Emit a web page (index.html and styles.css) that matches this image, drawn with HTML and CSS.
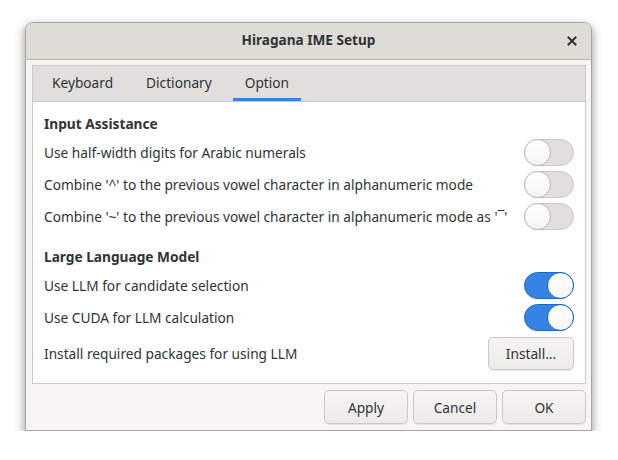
FILE: index.html
```html
<!DOCTYPE html>
<html>
<head>
<meta charset="utf-8">
<link rel="stylesheet" href="styles.css">
</head>
<body>
<div class="window">
  <div class="header">
    <div class="title">Hiragana IME Setup</div>
    <div class="close">
      <svg width="10" height="10" viewBox="0 0 10 10"><path d="M1.5 1.5 L8.5 8.5 M8.5 1.5 L1.5 8.5" stroke="#2e3436" stroke-width="2" stroke-linecap="square"/></svg>
    </div>
  </div>
  <div class="content">
    <div class="notebook">
      <div class="tabs">
        <div class="tab">Keyboard</div>
        <div class="tab">Dictionary</div>
        <div class="tab active">Option</div>
      </div>
      <div class="page">
        <div class="section-title">Input Assistance</div>
        <div class="row"><span>Use half-width digits for Arabic numerals</span><div class="switch"><div class="knob"></div></div></div>
        <div class="row"><span>Combine '^' to the previous vowel character in alphanumeric mode</span><div class="switch"><div class="knob"></div></div></div>
        <div class="row"><span>Combine '~' to the previous vowel character in alphanumeric mode as '¯'</span><div class="switch"><div class="knob"></div></div></div>
        <div class="section-title second">Large Language Model</div>
        <div class="row"><span>Use LLM for candidate selection</span><div class="switch on"><div class="knob"></div></div></div>
        <div class="row"><span>Use CUDA for LLM calculation</span><div class="switch on"><div class="knob"></div></div></div>
        <div class="row install-row"><span>Install required packages for using LLM</span><button class="btn install">Install...</button></div>
      </div>
    </div>
    <div class="actions">
      <button class="btn action">Apply</button>
      <button class="btn action">Cancel</button>
      <button class="btn action">OK</button>
    </div>
  </div>
</div>
</body>
</html>
```
FILE: styles.css
```css
html, body {
  margin: 0;
  padding: 0;
  background: #ffffff;
  font-family: "Noto Sans", "DejaVu Sans", sans-serif;
  font-size: 13.7px;
  color: #2e3436;
}
.window {
  margin: 22px 0 0 25px;
  width: 567px;
  height: 409px;
  box-sizing: border-box;
  border: 1px solid #a8a6a2;
  border-radius: 8px 8px 0 0;
  background: #f6f5f4;
  box-shadow: 0 4px 10px 1px rgba(0,0,0,0.38);
  display: flex;
  flex-direction: column;
}
.header {
  height: 37px;
  box-sizing: border-box;
  padding-bottom: 3px;
  flex: none;
  background: #dfdcd8;
  border-bottom: 1px solid #bfb8b1;
  border-radius: 7px 7px 0 0;
  display: flex;
  align-items: center;
  justify-content: center;
  position: relative;
}
.title {
  font-weight: bold;
  font-size: 13.6px;
}
.close {
  position: absolute;
  right: 14px;
  top: 13px;
  width: 10px;
  height: 10px;
  display: flex;
}
.content {
  flex: 1;
  padding: 5px 5px 0 6px;
  display: flex;
  flex-direction: column;
}
.notebook {
  border: 1px solid #cdc7c2;
  display: flex;
  flex-direction: column;
}
.tabs {
  height: 35px;
  background: #e1dedb;
  border-bottom: 1px solid #cdc7c2;
  display: flex;
  padding-left: 7px;
}
.tab {
  padding: 0 12px;
  margin-right: 9px;
  display: flex;
  align-items: center;
  box-sizing: border-box;
  height: 35px;
  padding-bottom: 2px;
  color: #2e3436;
}
.tab.active {
  border-bottom: 3px solid #3584e4;
  padding-bottom: 0;
}
.page {
  background: #ffffff;
  height: 281px;
  box-sizing: border-box;
  padding: 12px 11px 0 11px;
}
.section-title {
  font-weight: bold;
  height: 22px;
  line-height: 20px;
}
.section-title.second {
  margin-top: 15px;
  height: 22px;
}
.row {
  display: flex;
  align-items: center;
  justify-content: space-between;
  height: 32px;
  white-space: nowrap;
}
.install-row {
  height: 40px;
}
.switch {
  flex: none;
  width: 50px;
  height: 27px;
  box-sizing: border-box;
  border: 1px solid #cdc7c2;
  border-radius: 14px;
  background: #e1dedb;
  position: relative;
}
.knob {
  position: absolute;
  left: -1px;
  top: -1px;
  width: 27px;
  height: 27px;
  box-sizing: border-box;
  border-radius: 50%;
  border: 1px solid #bfb8b1;
  background: linear-gradient(#ffffff, #f6f5f4);
}
.switch.on {
  background: #3584e4;
  border-color: #1b6acb;
}
.switch.on .knob {
  left: auto;
  right: -1px;
  border-color: #1b6acb;
}
.btn {
  font-family: inherit;
  font-size: 13.7px;
  color: #2e3436;
  background: linear-gradient(#f6f5f4, #edebe9);
  border: 1px solid #cdc7c2;
  border-radius: 5px;
  box-shadow: 0 1px 0 rgba(0,0,0,0.07);
  padding: 0;
}
.install {
  width: 86px;
  height: 33px;
}
.actions {
  flex: 1;
  display: flex;
  justify-content: flex-end;
  align-items: center;
  gap: 5px;
  padding-right: 0;
}
.action {
  width: 84px;
  height: 34px;
}
```
